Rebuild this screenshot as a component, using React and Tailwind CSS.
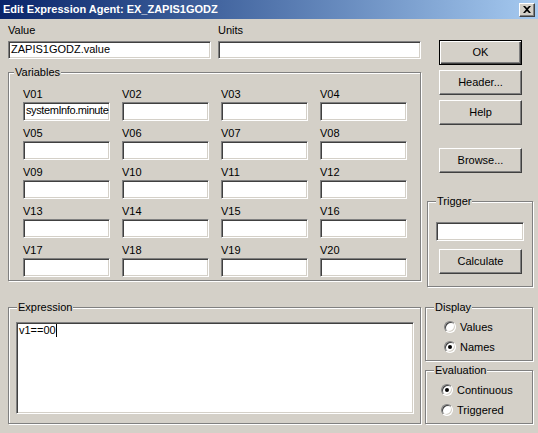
import React from 'react';

// Win2k-style "Edit Expression Agent" dialog

const sunken =
  'bg-white border border-t-[#808080] border-l-[#808080] border-b-white border-r-white shadow-[inset_1px_1px_0_#404040,inset_-1px_-1px_0_#d4d0c8]';
const raised =
  'flex items-center justify-center border border-t-white border-l-white border-b-[#404040] border-r-[#404040] shadow-[inset_-1px_-1px_0_#808080]';
const groupBox =
  'relative border border-[#808080] shadow-[1px_1px_0_#ffffff,inset_1px_1px_0_#ffffff]';

const Edit = ({ className = '', value = '' }) => (
  <div className={`${sunken} ${className} overflow-hidden whitespace-nowrap pl-[2px] leading-[15px]`}>
    {value}
  </div>
);

const Button = ({ label, className = '' }) => (
  <div className={`${raised} ${className} w-[83px] h-[25px]`}>{label}</div>
);

const Group = ({ label, labelLeft, className = '', children }) => (
  <div className={`${groupBox} ${className}`}>
    <span className={`absolute -top-[7px] ${labelLeft} bg-[#d4d0c8] px-[1px] leading-[13px]`}>{label}</span>
    {children}
  </div>
);

const Radio = ({ checked }) => (
  <div className="w-[12px] h-[12px] rounded-full bg-white border border-t-[#808080] border-l-[#808080] border-b-white border-r-white shadow-[inset_1px_1px_0_#404040,inset_-1px_-1px_0_#d4d0c8] flex items-center justify-center">
    {checked && <div className="w-[4px] h-[4px] rounded-full bg-black" />}
  </div>
);

const RadioRow = ({ label, checked }) => (
  <div className="flex items-center h-[20px] gap-[4px]">
    <Radio checked={checked} />
    <span className="leading-[13px]">{label}</span>
  </div>
);

const vars = Array.from({ length: 20 }, (_, i) => 'V' + String(i + 1).padStart(2, '0'));

export default function App() {
  return (
    <div className="w-[538px] h-[433px] bg-[#d4d0c8] text-black text-[11px] leading-[13px] font-['Liberation_Sans',Arial,sans-serif] flex flex-col overflow-hidden">
      {/* title bar */}
      <div className="h-[19px] flex items-center bg-gradient-to-r from-[#0a246a] to-[#a6caf0] pl-[3px] pr-[3px]">
        <span className="text-white font-bold text-[11px]">Edit Expression Agent: EX_ZAPIS1GODZ</span>
        <div className={`${raised} ml-auto w-[16px] h-[14px] bg-[#d4d0c8]`}>
          <svg width="8" height="7" viewBox="0 0 8 7">
            <path d="M0 0h2l2 2 2-2h2L5 3.5 8 7H6L4 5 2 7H0l3-3.5z" fill="#000" />
          </svg>
        </div>
      </div>

      <div className="flex">
        {/* left column */}
        <div className="ml-[8px] w-[413px] flex flex-col">
          <div className="flex mt-[5px]">
            <div className="w-[203px] flex flex-col">
              <span className="h-[13px]">Value</span>
              <Edit className="mt-[4px] h-[18px]" value="ZAPIS1GODZ.value" />
            </div>
            <div className="ml-[7px] w-[203px] flex flex-col">
              <span className="h-[13px]">Units</span>
              <Edit className="mt-[4px] h-[18px]" />
            </div>
          </div>

          <Group label="Variables" labelLeft="left-[5px]" className="mt-[13px] h-[209px] pt-[15px] pl-[14px]">
            <div className="grid grid-cols-[87px_87px_87px_87px] gap-x-[12px] gap-y-[6px]">
              {vars.map((v, i) => (
                <div key={v} className="flex flex-col">
                  <span className="h-[13px]">{v}</span>
                  <Edit
                    className={`mt-[1px] h-[19px] ${i === 0 ? 'tracking-[-0.4px]' : ''}`}
                    value={i === 0 ? 'systemInfo.minute' : ''}
                  />
                </div>
              ))}
            </div>
          </Group>

          <Group label="Expression" labelLeft="left-[8px]" className="mt-[26px] h-[117px] pt-[14px] pl-[7px]">
            <div className={`${sunken} w-[398px] h-[92px] pl-[2px] pt-[1px] flex items-start`}>
              <span>v1==00</span>
              <span className="w-[1px] h-[13px] bg-black" />
            </div>
          </Group>
        </div>

        {/* right column */}
        <div className="ml-[4px] w-[108px] flex flex-col">
          <div className="ml-[14px] mt-[21px] flex flex-col gap-[5px]">
            <div className="w-[83px] h-[25px] flex items-center justify-center border border-black shadow-[inset_1px_1px_0_#ffffff,inset_-1px_-1px_0_#404040,inset_-2px_-2px_0_#808080]">
              OK
            </div>
            <Button label="Header..." />
            <Button label="Help" />
            <Button label="Browse..." className="mt-[18px]" />
          </div>

          <Group label="Trigger" labelLeft="left-[8px]" className="ml-[2px] mt-[28px] w-[106px] h-[86px] pt-[20px] pl-[8px]">
            <Edit className="w-[88px] h-[19px]" />
            <Button label="Calculate" className="mt-[8px] ml-[3px]" />
          </Group>

          <Group label="Display" labelLeft="left-[8px]" className="mt-[20px] w-[108px] h-[54px] pt-[9px] pl-[18px]">
            <RadioRow label="Values" />
            <RadioRow label="Names" checked />
          </Group>

          <Group label="Evaluation" labelLeft="left-[8px]" className="mt-[9px] w-[108px] h-[54px] pt-[9px] pl-[15px]">
            <RadioRow label="Continuous" checked />
            <RadioRow label="Triggered" />
          </Group>
        </div>
      </div>
    </div>
  );
}
